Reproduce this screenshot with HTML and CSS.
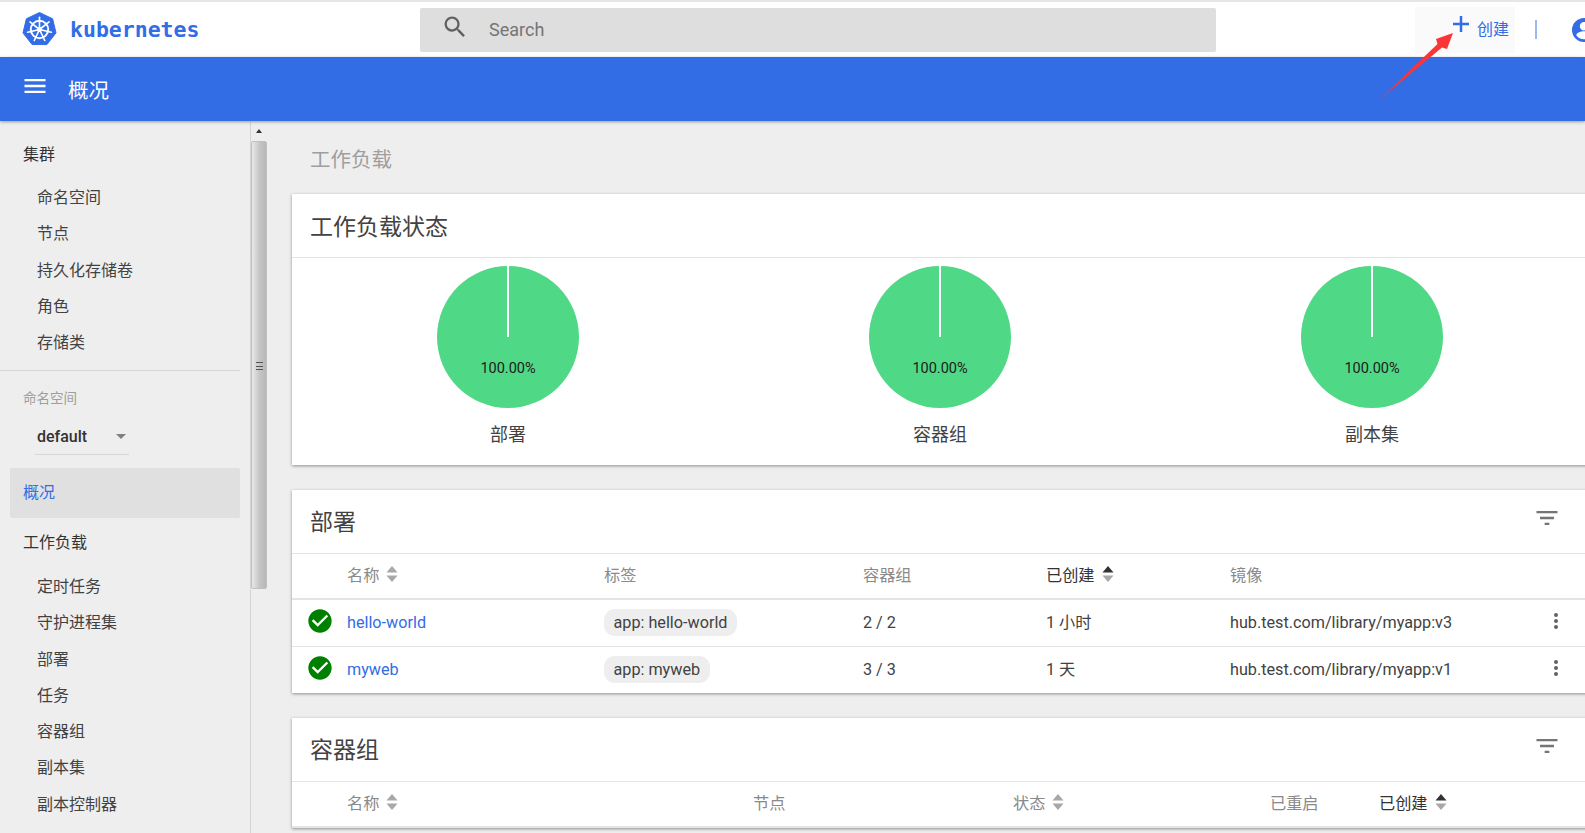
FILE: index.html
```html
<!DOCTYPE html>
<html lang="zh-CN">
<head>
  <meta charset="UTF-8" />
  <title>概况 - Kubernetes Dashboard</title>
  <link rel="stylesheet" href="styles.css">
</head>
<body>
  <div class="topbar">
    <div class="brand">
      <svg class="brand-logo" viewBox="0 0 36 36">
        <polygon points="18,0.5 31.5,7 35,21.5 25.6,33.5 10.4,33.5 1,21.5 4.5,7" fill="#326de6" stroke="#326de6" stroke-width="1" stroke-linejoin="round"/>
        <g fill="none" stroke="#fff">
          <circle cx="18" cy="18" r="9" stroke-width="2"/>
          <g stroke-width="1.7" stroke-linecap="round">
            <path d="M18 18V5.5"/>
            <path d="M18 18L27.8 10.2"/>
            <path d="M18 18L30.2 20.8"/>
            <path d="M18 18L23.4 29.3"/>
            <path d="M18 18L12.6 29.3"/>
            <path d="M18 18L5.8 20.8"/>
            <path d="M18 18L8.2 10.2"/>
          </g>
        </g>
        <circle cx="18" cy="18" r="2.6" fill="#fff"/>
      </svg>
      <span class="brand-name">kubernetes</span>
    </div>
    <div class="search">
      <svg class="search-icon" viewBox="0 0 24 24"><path d="M15.5 14h-.79l-.28-.27A6.47 6.47 0 0 0 16 9.5 6.5 6.5 0 1 0 9.5 16c1.61 0 3.09-.59 4.23-1.57l.27.28v.79l5 4.99L20.49 19l-4.99-5zm-6 0C7.01 14 5 11.99 5 9.5S7.01 5 9.5 5 14 7.01 14 9.5 11.99 14 9.5 14z"/></svg>
      <span class="search-text">Search</span>
    </div>
    <div class="create-btn">
      <svg class="plus-icon" viewBox="0 0 18 18"><path d="M9 1v16M1 9h16"/></svg>
      <span class="create-text">创建</span>
    </div>
    <div class="top-divider"></div>
    <svg class="account-icon" viewBox="0 0 24 24"><path d="M12 0a12 12 0 1 0 0 24 12 12 0 0 0 0-24zm0 4a4.2 4.2 0 1 1 0 8.400 4.200 4.200 0 0 1 0-8.400zm0 17.300c-3.200 0-6-1.600-7.700-4.100 0-2.500 5.100-3.900 7.700-3.900s7.700 1.400 7.700 3.900c-1.700 2.500-4.500 4.100-7.700 4.100z"/></svg>
  </div>

  <div class="titlebar">
    <svg class="menu-icon" viewBox="0 0 24 24"><path d="M3 18h18v-2H3v2zm0-5h18v-2H3v2zm0-7v2h18V6H3z"/></svg>
    <span class="titlebar-text">概况</span>
  </div>

  <div class="layout">
    <div class="sidebar">
      <div class="nav-head">集群</div>
      <div class="nav-item">命名空间</div>
      <div class="nav-item">节点</div>
      <div class="nav-item">持久化存储卷</div>
      <div class="nav-item">角色</div>
      <div class="nav-item">存储类</div>
      <div class="nav-line"></div>
      <div class="ns-label">命名空间</div>
      <div class="ns-select">
        <span>default</span>
        <span class="ns-caret"></span>
      </div>
      <div class="nav-active">概况</div>
      <div class="nav-head nav-head-second">工作负载</div>
      <div class="nav-item">定时任务</div>
      <div class="nav-item">守护进程集</div>
      <div class="nav-item">部署</div>
      <div class="nav-item">任务</div>
      <div class="nav-item">容器组</div>
      <div class="nav-item">副本集</div>
      <div class="nav-item">副本控制器</div>
    </div>

    <div class="scrollbar">
      <div class="scroll-up"></div>
      <div class="scroll-thumb"><div class="scroll-grip"></div></div>
    </div>

    <div class="main">
      <div class="page-title">工作负载</div>

      <div class="card">
        <div class="card-head"><span class="card-title">工作负载状态</span></div>
        <div class="pies">
          <div class="pie">
            <svg class="pie-chart" viewBox="0 0 142 142">
              <circle cx="71" cy="71" r="71"/>
              <path d="M71 0v71"/>
              <text x="71" y="107">100.00%</text>
            </svg>
            <div class="pie-label">部署</div>
          </div>
          <div class="pie">
            <svg class="pie-chart" viewBox="0 0 142 142">
              <circle cx="71" cy="71" r="71"/>
              <path d="M71 0v71"/>
              <text x="71" y="107">100.00%</text>
            </svg>
            <div class="pie-label">容器组</div>
          </div>
          <div class="pie">
            <svg class="pie-chart" viewBox="0 0 142 142">
              <circle cx="71" cy="71" r="71"/>
              <path d="M71 0v71"/>
              <text x="71" y="107">100.00%</text>
            </svg>
            <div class="pie-label">副本集</div>
          </div>
        </div>
      </div>

      <div class="card">
        <div class="card-head">
          <span class="card-title">部署</span>
          <svg class="filter-icon" viewBox="0 0 24 24"><path d="M10 18h4v-2h-4v2zM3 6v2h18V6H3zm3 7h12v-2H6v2z"/></svg>
        </div>
        <div class="row row-head deploy-cols">
          <span></span>
          <span class="col-name">名称 <svg class="sort" viewBox="0 0 12 18"><path d="M6 1l5.500 6.500H.5zM6 17L.5 10.500h11z"/></svg></span>
          <span>标签</span>
          <span>容器组</span>
          <span class="col-active">已创建 <svg class="sort sort-desc" viewBox="0 0 12 18"><path class="sort-on" d="M6 1l5.500 6.500H.5z"/><path d="M6 17L.5 10.500h11z"/></svg></span>
          <span>镜像</span>
          <span></span>
        </div>
        <div class="row deploy-cols">
          <svg class="ok-icon" viewBox="0 0 24 24"><circle cx="12" cy="12" r="7" fill="#fff"/><path d="M12 2C6.480 2 2 6.480 2 12s4.480 10 10 10 10-4.480 10-10S17.520 2 12 2zm-2 15l-5-5 1.410-1.410L10 14.170l7.590-7.590L19 8l-9 9z"/></svg>
          <a class="link">hello-world</a>
          <span><span class="chip">app: hello-world</span></span>
          <span>2 / 2</span>
          <span>1 小时</span>
          <span>hub.test.com/library/myapp:v3</span>
          <svg class="more-icon" viewBox="0 0 24 24"><path d="M12 8a2 2 0 1 0 0-4 2 2 0 0 0 0 4zm0 2a2 2 0 1 0 0 4 2 2 0 0 0 0-4zm0 6a2 2 0 1 0 0 4 2 2 0 0 0 0-4z"/></svg>
        </div>
        <div class="row row-last deploy-cols">
          <svg class="ok-icon" viewBox="0 0 24 24"><circle cx="12" cy="12" r="7" fill="#fff"/><path d="M12 2C6.480 2 2 6.480 2 12s4.480 10 10 10 10-4.480 10-10S17.520 2 12 2zm-2 15l-5-5 1.410-1.410L10 14.170l7.590-7.590L19 8l-9 9z"/></svg>
          <a class="link">myweb</a>
          <span><span class="chip">app: myweb</span></span>
          <span>3 / 3</span>
          <span>1 天</span>
          <span>hub.test.com/library/myapp:v1</span>
          <svg class="more-icon" viewBox="0 0 24 24"><path d="M12 8a2 2 0 1 0 0-4 2 2 0 0 0 0 4zm0 2a2 2 0 1 0 0 4 2 2 0 0 0 0-4zm0 6a2 2 0 1 0 0 4 2 2 0 0 0 0-4z"/></svg>
        </div>
      </div>

      <div class="card">
        <div class="card-head">
          <span class="card-title">容器组</span>
          <svg class="filter-icon" viewBox="0 0 24 24"><path d="M10 18h4v-2h-4v2zM3 6v2h18V6H3zm3 7h12v-2H6v2z"/></svg>
        </div>
        <div class="row row-head pod-cols">
          <span></span>
          <span class="col-name">名称 <svg class="sort" viewBox="0 0 12 18"><path d="M6 1l5.500 6.500H.5zM6 17L.5 10.500h11z"/></svg></span>
          <span>节点</span>
          <span class="col-name">状态 <svg class="sort" viewBox="0 0 12 18"><path d="M6 1l5.500 6.500H.5zM6 17L.5 10.500h11z"/></svg></span>
          <span>已重启</span>
          <span class="col-active">已创建 <svg class="sort sort-desc" viewBox="0 0 12 18"><path class="sort-on" d="M6 1l5.500 6.500H.5z"/><path d="M6 17L.5 10.500h11z"/></svg></span>
        </div>
      </div>
    </div>
  </div>

  <svg class="arrow" viewBox="0 0 90 80">
    <path d="M1 69L59.500 13 58 8 75 2 69 18 64 16.500z"/>
  </svg>
</body>
</html>
```

FILE: styles.css
```css
* {
  box-sizing: border-box;
}
html, body {
  height: 100%;
}
body {
  margin: 0;
  overflow: hidden;
  font-family: Roboto, 'Noto Sans CJK SC', sans-serif;
  font-size: 16px;
  color: #424242;
  background: #eee;
}

/* top bar */
.topbar {
  display: flex;
  align-items: center;
  height: 57px;
  background: #fff;
  border-top: 2px solid #e6e6e6;
}
.brand {
  display: flex;
  flex: none;
  align-items: center;
  gap: 13px;
  width: 420px;
  padding-left: 22px;
}
.brand-logo {
  width: 35px;
  height: 35px;
}
.brand-name {
  font-family: 'DejaVu Sans Mono', monospace;
  font-weight: bold;
  font-size: 21.500px;
  color: #326de6;
}
.search {
  display: flex;
  flex: none;
  align-items: center;
  width: 796px;
  height: 44px;
  padding-left: 21px;
  background: #dedede;
  border-radius: 2px;
}
.search-icon {
  width: 28px;
  height: 28px;
  margin-top: -6px;
  fill: #616161;
}
.search-text {
  margin-left: 20px;
  font-size: 18px;
  color: #757575;
}
.create-btn {
  display: flex;
  flex: none;
  align-items: center;
  gap: 7px;
  width: 100px;
  height: 46px;
  margin-left: 199px;
  padding-left: 37px;
  background: #fafafa;
  color: #326de6;
}
.plus-icon {
  width: 18px;
  height: 18px;
  margin-top: -12px;
  fill: none;
  stroke: #326de6;
  stroke-width: 2.500;
}
.create-text {
  margin-top: -3px;
}
.top-divider {
  flex: none;
  width: 2px;
  height: 19px;
  margin-left: 20px;
  background: #9db8f0;
}
.account-icon {
  flex: none;
  width: 24px;
  height: 24px;
  margin-left: 35px;
  fill: #326de6;
}

/* blue title bar */
.titlebar {
  display: flex;
  align-items: center;
  height: 64px;
  padding-left: 21px;
  background: #326de6;
  box-shadow: 0 1px 3px rgba(0, 0, 0, 0.35);
  position: relative;
  z-index: 2;
}
.menu-icon {
  width: 28px;
  height: 28px;
  margin-top: -7px;
  fill: #fff;
}
.titlebar-text {
  margin-left: 19px;
  font-size: 20.500px;
  color: #fff;
}

.layout {
  display: flex;
  height: 712px;
}

/* sidebar */
.sidebar {
  flex: none;
  width: 251px;
  padding: 16px 10px 0 0;
  background: #eee;
  border-right: 1px solid #d4d4d4;
}
.nav-head {
  height: 36px;
  margin-bottom: 7px;
  padding-left: 23px;
  line-height: 36px;
  color: #333;
}
.nav-head-second {
  margin-top: 7px;
  margin-bottom: 7.500px;
}
.nav-item {
  height: 36.300px;
  padding-left: 37px;
  line-height: 36.300px;
  color: #424242;
  white-space: nowrap;
}
.nav-line {
  height: 1px;
  margin-top: 9px;
  background: #d6d6d6;
}
.ns-label {
  height: 20px;
  margin-top: 17px;
  padding-left: 23px;
  line-height: 20px;
  font-size: 13.500px;
  color: #9e9e9e;
}
.ns-select {
  display: flex;
  align-items: center;
  justify-content: space-between;
  width: 94px;
  height: 37px;
  margin: 10px 0 0 35px;
  padding: 0 3px 0 2px;
  border-bottom: 1px solid #d6d6d6;
  font-weight: 500;
  color: #333;
}
.ns-caret {
  width: 0;
  height: 0;
  border-left: 5.500px solid transparent;
  border-right: 5.500px solid transparent;
  border-top: 5.500px solid #808080;
}
.nav-active {
  height: 50px;
  margin: 13px 0 0 10px;
  padding-left: 13px;
  line-height: 50px;
  background: #e0e0e0;
  border-radius: 2px;
  color: #326de6;
}

/* fake browser scrollbar of the sidebar */
.scrollbar {
  flex: none;
  width: 16px;
  padding-top: 20px;
  position: relative;
  background: #eee;
}
.scroll-up {
  position: absolute;
  top: 8px;
  left: 5px;
  width: 0;
  height: 0;
  border-left: 3.500px solid transparent;
  border-right: 3.500px solid transparent;
  border-bottom: 4px solid #333;
}
.scroll-thumb {
  display: flex;
  align-items: center;
  justify-content: center;
  height: 448px;
  padding-top: 2px;
  background: linear-gradient(to right, #e8e8e8, #c4c4c4 55%, #b8b8b8);
  border: 1px solid #c0c0c0;
  border-radius: 2px;
}
.scroll-grip {
  width: 7px;
  height: 8px;
  border-top: 1px solid #555;
  border-bottom: 1px solid #555;
  background: linear-gradient(#555, #555) center / 100% 1px no-repeat;
}

/* main area */
.main {
  flex: 1;
  min-width: 0;
  padding: 0 0 0 25px;
  overflow: hidden;
}
.page-title {
  height: 73px;
  padding: 23.500px 0 0 18px;
  line-height: 30px;
  font-size: 20.500px;
  color: #9e9e9e;
}
.card {
  width: 1296px;
  margin-bottom: 24.500px;
  background: #fff;
  box-shadow: 0 1px 3px rgba(0, 0, 0, 0.4);
}
.card-head {
  display: flex;
  align-items: center;
  justify-content: space-between;
  height: 64px;
  padding: 0 27px 0 18px;
  border-bottom: 1px solid #e4e4e4;
}
.card-title {
  margin-top: -2px;
  font-size: 23px;
  color: #424242;
}
.filter-icon {
  width: 28px;
  height: 28px;
  margin-top: -6px;
  fill: #757575;
}

/* pies */
.pies {
  display: grid;
  grid-template-columns: repeat(3, 432px);
  height: 207px;
  padding-top: 8px;
}
.pie {
  display: flex;
  flex-direction: column;
  align-items: center;
}
.pie-chart {
  width: 142px;
  height: 142px;
}
.pie-chart circle {
  fill: #4fd885;
}
.pie-chart path {
  stroke: #fff;
  stroke-width: 2;
}
.pie-chart text {
  font-size: 14.500px;
  text-anchor: middle;
  fill: #1c1c1c;
}
.pie-label {
  margin-top: 15px;
  line-height: 24px;
  font-size: 18px;
  color: #424242;
}

/* tables */
.row {
  display: grid;
  align-items: center;
  height: 46.500px;
  border-bottom: 1px solid #e4e4e4;
  white-space: nowrap;
  font-size: 16.200px;
  line-height: 20px;
}
.row-head {
  border-bottom-width: 2px;
  color: #8a8a8a;
}
.row-last {
  border-bottom: none;
}
.deploy-cols {
  grid-template-columns: 55px 257px 259px 183px 184px 314px 48px;
}
.pod-cols {
  grid-template-columns: 55px 406px 260px 257px 109px 1fr;
}
.col-active {
  color: #333;
}
.sort {
  width: 12px;
  height: 18px;
  margin-left: 3px;
  vertical-align: -2px;
  fill: #a8a8a8;
}
.sort-on {
  fill: #333;
}
.ok-icon {
  width: 28px;
  height: 28px;
  margin-left: 14px;
  margin-top: -3px;
  fill: #008000;
}
.link {
  color: #326de6;
}
.chip {
  display: inline-block;
  height: 27px;
  padding: 0 9.500px;
  line-height: 27px;
  background: #eee;
  border-radius: 11px;
  color: #424242;
}
.more-icon {
  width: 24px;
  height: 24px;
  margin-top: -3px;
  fill: #616161;
}

/* annotation drawn over the screenshot */
.arrow {
  position: absolute;
  top: 31px;
  left: 1378px;
  z-index: 3;
  width: 90px;
  height: 80px;
  fill: #fb3535;
}
```
